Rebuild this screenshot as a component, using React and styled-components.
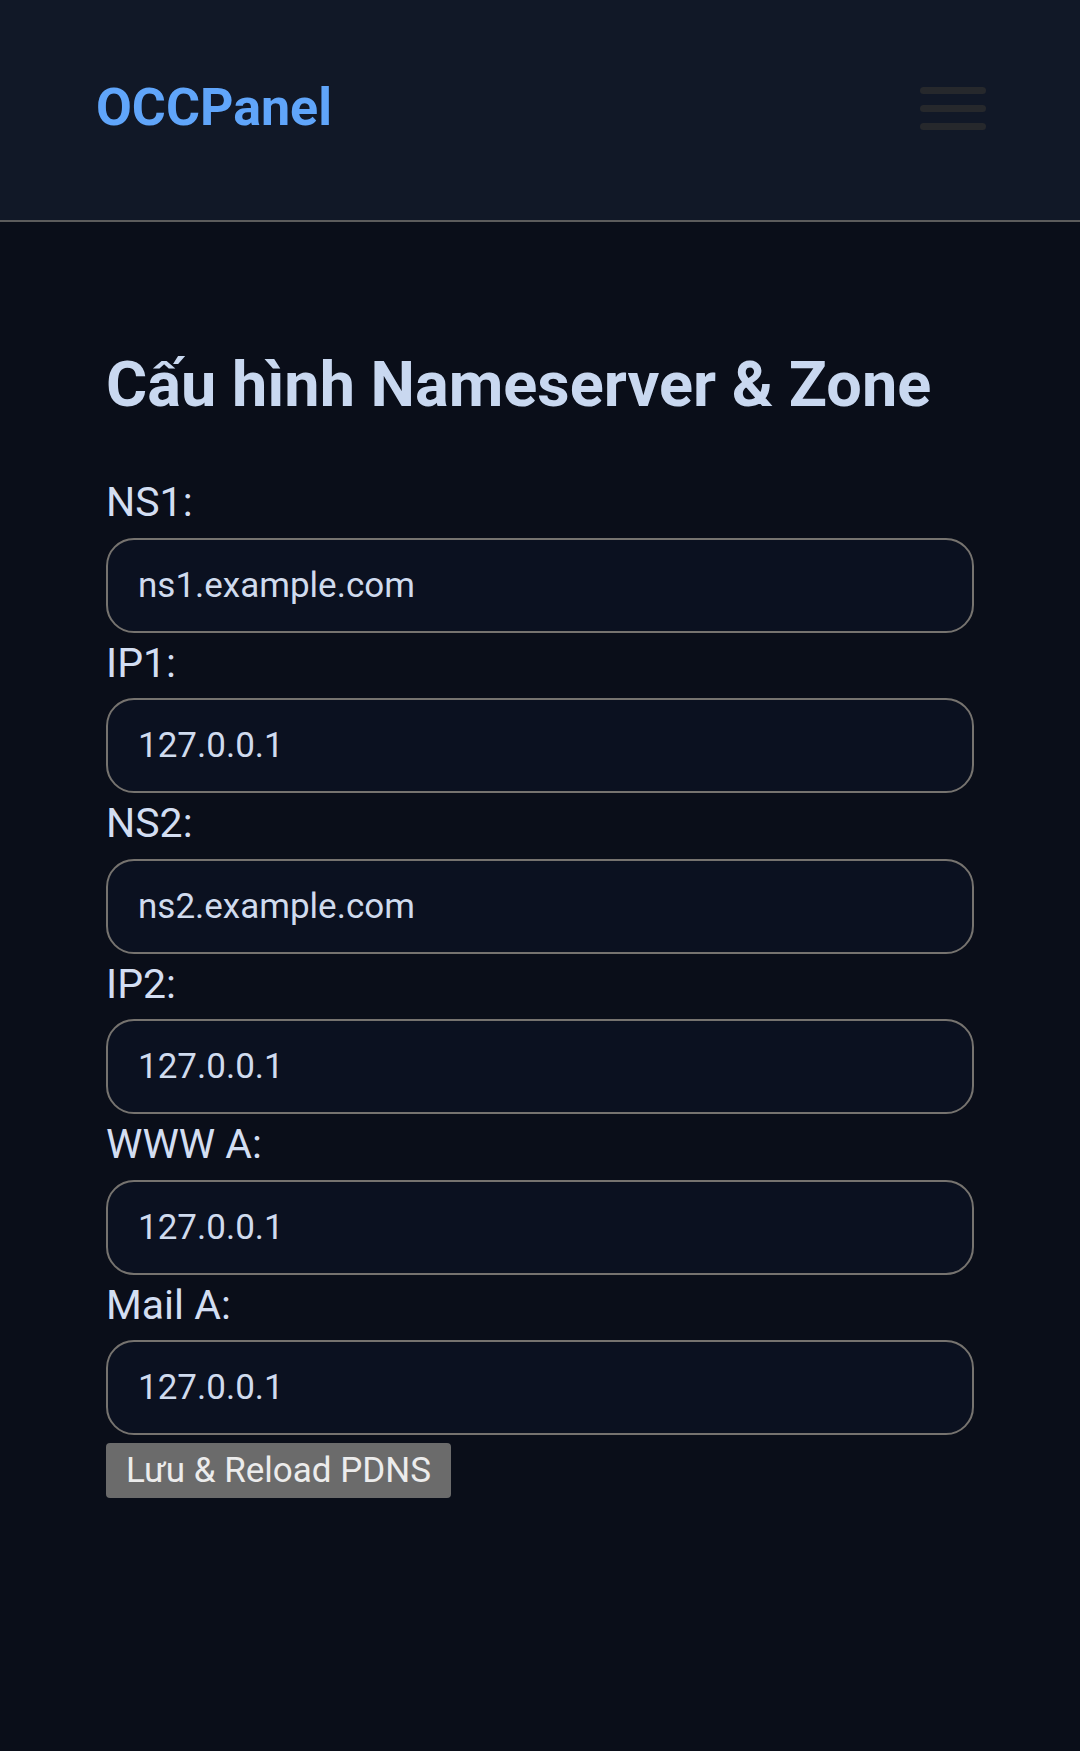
import React from 'react';
import styled, { createGlobalStyle } from 'styled-components';

const GlobalStyle = createGlobalStyle`
  html, body {
    margin: 0;
    padding: 0;
    background: #0a0e19;
    font-family: Roboto, "Noto Sans", "Liberation Sans", sans-serif;
  }
`;

const Page = styled.div`
  min-height: 1751px;
  background: #0a0e19;
`;

const Header = styled.header`
  height: 220px;
  display: flex;
  align-items: center;
  justify-content: space-between;
  padding: 0 94px 0 96px;
  background: #111827;
  border-bottom: 2px solid #5c5c5c;
`;

const Logo = styled.a`
  font-size: 52px;
  font-weight: 700;
  color: #60a5fa;
  text-decoration: none;
  margin-top: -6px;
`;

const MenuButton = styled.button`
  display: flex;
  flex-direction: column;
  gap: 11px;
  padding: 0;
  background: none;
  border: none;
  margin-top: -4px;
`;

const Bar = styled.span`
  display: block;
  width: 66px;
  height: 7px;
  border-radius: 4px;
  background: #26282c;
`;

const Main = styled.main`
  padding: 126px 106px 0;
`;

const Title = styled.h2`
  margin: 0 0 51px;
  font-size: 63px;
  line-height: 73px;
  font-weight: 700;
  color: #c9d8f0;
`;

const Form = styled.form`
  display: flex;
  flex-direction: column;
  align-items: flex-start;
`;

const Label = styled.label`
  display: block;
  margin: 6px 0 11px;
  font-size: 41px;
  line-height: 48.5px;
  color: #d3def2;
`;

const Input = styled.input`
  box-sizing: border-box;
  width: 100%;
  height: 95px;
  padding: 0 30px;
  border: 2px solid #76736f;
  border-radius: 28px;
  background: #0b1120;
  color: #d0dbee;
  font-family: inherit;
  font-size: 35px;
  outline: none;
`;

const SubmitButton = styled.button`
  margin-top: 8px;
  height: 55px;
  padding: 0 20px;
  border: none;
  border-radius: 4px;
  background: #6b6b6b;
  color: #ececec;
  font-family: inherit;
  font-size: 35px;
`;

const fields = [
  { label: 'NS1:', value: 'ns1.example.com' },
  { label: 'IP1:', value: '127.0.0.1' },
  { label: 'NS2:', value: 'ns2.example.com' },
  { label: 'IP2:', value: '127.0.0.1' },
  { label: 'WWW A:', value: '127.0.0.1' },
  { label: 'Mail A:', value: '127.0.0.1' },
];

const App = () => {
  return (
    <Page>
      <GlobalStyle />
      <Header>
        <Logo href="#">OCCPanel</Logo>
        <MenuButton type="button" aria-label="Menu">
          <Bar />
          <Bar />
          <Bar />
        </MenuButton>
      </Header>
      <Main>
        <Title>Cấu hình Nameserver &amp; Zone</Title>
        <Form onSubmit={(e) => e.preventDefault()}>
          {fields.map((f) => (
            <React.Fragment key={f.label}>
              <Label>{f.label}</Label>
              <Input defaultValue={f.value} />
            </React.Fragment>
          ))}
          <SubmitButton type="submit">Lưu &amp; Reload PDNS</SubmitButton>
        </Form>
      </Main>
    </Page>
  );
};

export default App;
